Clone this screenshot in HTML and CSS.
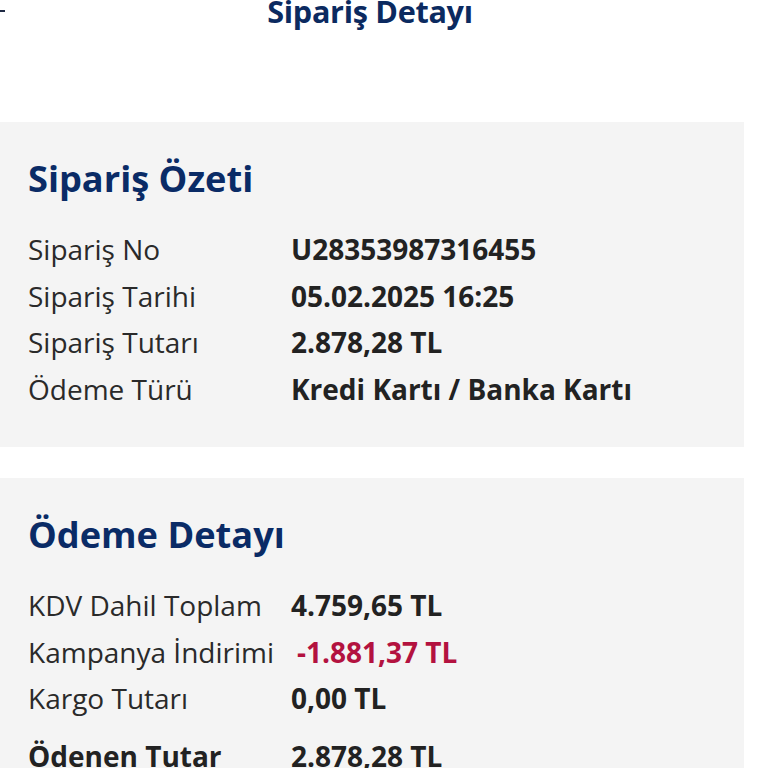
FILE: index.html
```html
<!DOCTYPE html>
<html lang="tr">
<head>
<meta charset="utf-8">
<title>Sipariş Detayı</title>
<link rel="stylesheet" href="styles.css">
</head>
<body>
<div class="page">
  <header class="topbar">
    <span class="back" aria-hidden="true"></span>
    <h1 class="topbar-title">Sipariş Detayı</h1>
  </header>

  <section class="card card-summary">
    <h2 class="card-title">Sipariş Özeti</h2>
    <div class="rows">
      <div class="label">Sipariş No</div><div class="value">U28353987316455</div>
      <div class="label">Sipariş Tarihi</div><div class="value">05.02.2025 16:25</div>
      <div class="label">Sipariş Tutarı</div><div class="value">2.878,28 TL</div>
      <div class="label">Ödeme Türü</div><div class="value">Kredi Kartı / Banka Kartı</div>
    </div>
  </section>

  <section class="card card-payment">
    <h2 class="card-title">Ödeme Detayı</h2>
    <div class="rows">
      <div class="label">KDV Dahil Toplam</div><div class="value">4.759,65 TL</div>
      <div class="label">Kampanya İndirimi</div><div class="value discount">-1.881,37 TL</div>
      <div class="label">Kargo Tutarı</div><div class="value">0,00 TL</div>
      <div class="label total">Ödenen Tutar</div><div class="value total">2.878,28 TL</div>
    </div>
  </section>
</div>
</body>
</html>
```

FILE: styles.css
```css
html, body {
  margin: 0;
  padding: 0;
  background: #ffffff;
}

body {
  font-family: "Open Sans", "Noto Sans", sans-serif;
  color: #222222;
}

.page {
  width: 744px;
}

.topbar {
  position: relative;
  height: 122px;
}

.back {
  position: absolute;
  left: 0;
  top: 10px;
  width: 5px;
  height: 2px;
  background: #1f2a44;
}

.topbar-title {
  margin: 0;
  padding-right: 4px;
  text-align: center;
  font-size: 30.6px;
  line-height: 23px;
  font-weight: 700;
  color: #0b2a60;
  letter-spacing: -0.3px;
}

.card {
  background: #f4f4f4;
  padding: 31px 0 35px 28px;
}

.card-payment {
  margin-top: 31px;
}

.card-title {
  margin: 0;
  font-size: 36.2px;
  line-height: 50px;
  font-weight: 700;
  color: #0a2b66;
}

.rows {
  display: grid;
  grid-template-columns: 263px 1fr;
  margin-top: 23px;
  font-size: 28px;
  line-height: 46.5px;
}

.label {
  font-weight: 400;
  color: #2a2a2a;
  white-space: nowrap;
}

.value {
  font-weight: 700;
  color: #222222;
  white-space: nowrap;
}

.discount {
  color: #b3123f;
  padding-left: 6px;
}

.total {
  margin-top: 11px;
  font-weight: 700;
  color: #222222;
}
```
